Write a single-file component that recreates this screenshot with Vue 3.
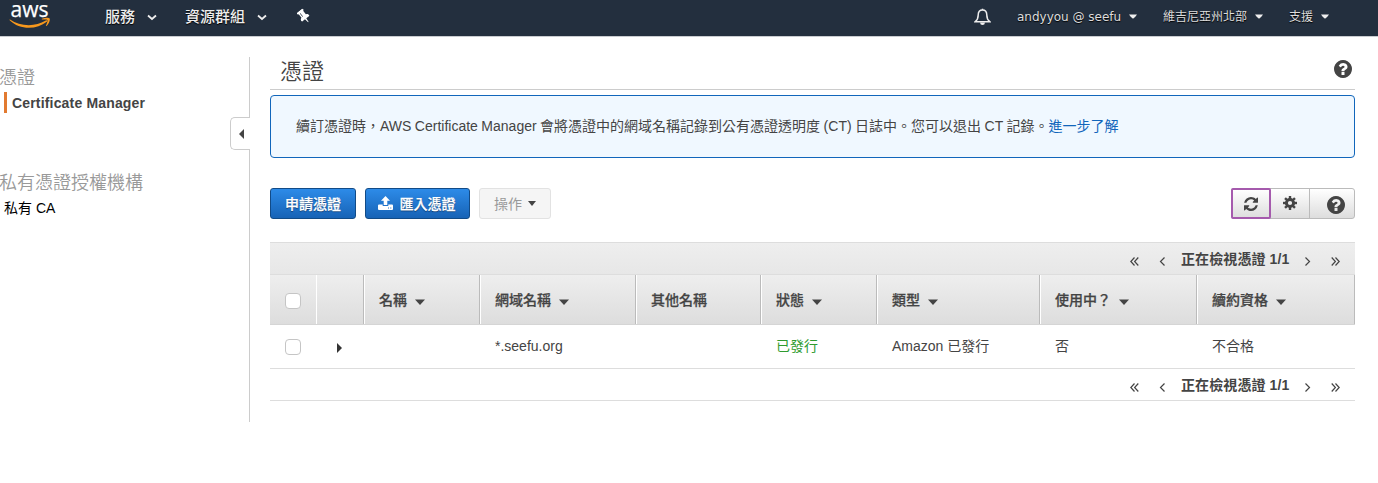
<script setup>
const columns = [
  { label: '', kind: 'check' },
  { label: '', kind: 'blank' },
  { label: '名稱', sort: true, value: '' },
  { label: '網域名稱', sort: true, value: '*.seefu.org' },
  { label: '其他名稱', sort: false, value: '' },
  { label: '狀態', sort: true, value: '已發行', tone: 'ok' },
  { label: '類型', sort: true, value: 'Amazon 已發行' },
  { label: '使用中？', sort: true, value: '否' },
  { label: '續約資格', sort: true, value: '不合格' },
]
const cells = columns.slice(2)
const pagers = ['top', 'bottom']
const helpPath = 'M896 1376v-192q0-14-9-23t-23-9h-192q-14 0-23 9t-9 23v192q0 14 9 23t23 9h192q14 0 23-9t9-23zM1152 704q0-88-55.500-163t-138.500-116-170-41q-243 0-371 213-15 24 8 42l132 100q7 6 19 6 16 0 25-12 53-68 86-92 34-24 86-24 48 0 85.500 26t37.500 59q0 38-20 61t-68 45q-63 28-115.500 86.500t-52.500 125.500v36q0 14 9 23t23 9h192q14 0 23-9t9-23q0-19 21.500-49.500t54.500-49.500q32-18 49-28.500t46-35 44.500-48 28-60.500 12.500-81zM1536 896q0 209-103 385.500t-279.500 279.500-385.500 103-385.500-103-279.500-279.500-103-385.500 103-385.500 279.500-279.500 385.500-103 385.500 103 279.500 279.500 103 385.500z'
const refreshPath = 'M1511 1056q0 5-1 7-64 268-268 434.500t-478 166.500q-146 0-282.500-55t-243.500-157l-129 129q-19 19-45 19t-45-19-19-45v-448q0-26 19-45t45-19h448q26 0 45 19t19 45-19 45l-137 137q71 66 161 102t187 36q134 0 250-65t186-179q11-17 53-117 8-23 30-23h192q13 0 22.500 9.500t9.500 22.500zM1536 256v448q0 26-19 45t-45 19h-448q-26 0-45-19t-19-45 19-45l138-138q-148-137-349-137-134 0-250 65t-186 179q-11 17-53 117-8 23-30 23h-199q-13 0-22.500-9.500t-9.500-22.500v-7q65-268 270-434.500t480-166.500q146 0 284 55.500t245 156.500l130-129q19-19 45-19t45 19 19 45z'
const pinPath = 'M480 864v-448q0-14-9-23t-23-9-23 9-9 23v448q0 14 9 23t23 9 23-9 9-23zM1152 1216q0 26-19 45t-45 19h-429l-51 483q-2 12-10.500 20.500t-20.500 8.500h-1q-27 0-32-27l-76-485h-404q-26 0-45-19t-19-45q0-123 78.500-221.500t177.500-98.500v-512q-52 0-90-38t-38-90 38-90 90-38h640q52 0 90 38t38 90-38 90-90 38v512q99 0 177.500 98.500t78.500 221.500z'
const teeth = [0, 45, 90, 135, 180, 225, 270, 315]
</script>

<template>
  <div class="page">
    <nav class="nav">
      <svg class="logo" viewBox="0 0 42 28">
        <text x="1.500" y="14" textLength="38" lengthAdjust="spacingAndGlyphs">aws</text>
        <path class="smile" d="M1 16.500C11 23.300 25.500 24.300 36.800 17.500C38 17 38.600 18 37.800 18.700C27.500 27 10.500 27 .7 17.200C.3 16.700.5 16.300 1 16.500Z" />
        <path class="smile" d="M33 15.800C36 14.300 40 14.500 40.700 15.500C41.400 17 39.700 21.300 37.500 23C37 23.300 36.700 23 37 22.500C37.800 20.500 39 17.800 38.300 17C37.500 16.200 35 16.500 33.300 16.600C32.700 16.600 32.600 16.100 33 15.800Z" />
      </svg>
      <div class="nav-main">
        <a class="item services">服務<svg class="chev" viewBox="0 0 10 7"><path d="M1 1.500L5 5L9 1.500" /></svg></a>
        <a class="item groups">資源群組<svg class="chev" viewBox="0 0 10 7"><path d="M1 1.500L5 5L9 1.500" /></svg></a>
        <svg class="pin" viewBox="0 128 1152 1664"><path :d="pinPath" /></svg>
      </div>
      <div class="nav-side">
        <svg class="bell" viewBox="0 0 17 18"><path d="M8.500 2C5.500 2 4.200 4.300 4.200 7C4.200 10.500 3 12.300 1.300 13.700H15.700C14 12.300 12.800 10.500 12.800 7C12.800 4.300 11.500 2 8.500 2Z" /><path d="M8.500.7V2" /><path class="solid" d="M6 14.500H11Q10.700 17 8.500 17Q6.300 17 6 14.500Z" /></svg>
        <a class="item user">andyyou @ seefu<svg class="caret" viewBox="0 0 8 5"><path d="M0 .5H8Q6.500 3 4 4.700Q1.500 3 0 .5Z" /></svg></a>
        <a class="item region">維吉尼亞州北部<svg class="caret" viewBox="0 0 8 5"><path d="M0 .5H8Q6.500 3 4 4.700Q1.500 3 0 .5Z" /></svg></a>
        <a class="item support">支援<svg class="caret" viewBox="0 0 8 5"><path d="M0 .5H8Q6.500 3 4 4.700Q1.500 3 0 .5Z" /></svg></a>
      </div>
    </nav>

    <div class="body">
      <aside class="side">
        <h2>憑證</h2>
        <a class="current">Certificate Manager</a>
        <h2 class="second">私有憑證授權機構</h2>
        <a class="link">私有 CA</a>
        <button class="collapse"><svg viewBox="0 0 5 10"><path d="M5 0V10L0 5Z" /></svg></button>
      </aside>

      <main class="main">
        <header class="title">
          <h1>憑證</h1>
          <svg class="help" viewBox="0 128 1536 1536"><path :d="helpPath" /></svg>
        </header>
        <p class="notice"><span>續訂憑證時，AWS Certificate Manager 會將憑證中的網域名稱記錄到公有憑證透明度 (CT) 日誌中。您可以退出 CT 記錄。<a>進一步了解</a></span></p>

        <div class="toolbar">
          <button class="btn primary request">申請憑證</button>
          <button class="btn primary import">
            <svg viewBox="0 0 15 14"><path d="M7.500 0L12 4.700H9.300V9H5.700V4.700H3Z" /><path fill-rule="evenodd" d="M1 8.500H4.700V10H10.300V8.500H14Q15 8.500 15 9.500V13Q15 14 14 14H1Q0 14 0 13V9.500Q0 8.500 1 8.500ZM10 11.500V12.500H11V11.500ZM12.300 11.500V12.500H13.300V11.500Z" /></svg>匯入憑證
          </button>
          <button class="btn disabled">操作<svg viewBox="0 0 8 5"><path d="M0 0H8L4 5Z" /></svg></button>
          <div class="tools">
            <button class="tool refresh"><svg viewBox="0 128 1536 1536"><path :d="refreshPath" /></svg></button>
            <button class="tool gear">
              <svg viewBox="0 0 14 14"><circle cx="7" cy="7" r="3.600" /><rect v-for="t in teeth" :key="t" x="5.800" y="0" width="2.400" height="3.500" :transform="`rotate(${t} 7 7)`" /></svg>
            </button>
            <button class="tool about"><svg class="help" viewBox="0 128 1536 1536"><path :d="helpPath" /></svg></button>
          </div>
        </div>

        <section class="table">
          <template v-for="p in pagers" :key="p">
            <div class="pager" :class="p">
              <svg viewBox="0 0 9 9"><path d="M4.500.5L.8 4.500L4.500 8.500M8.300.5L4.600 4.500L8.300 8.500" /></svg>
              <svg class="one" viewBox="0 0 9 9"><path d="M6.500.5L2.500 4.500L6.500 8.500" /></svg>
              <b>正在檢視憑證 1/1</b>
              <svg class="one" viewBox="0 0 9 9"><path d="M2.500.5L6.500 4.500L2.500 8.500" /></svg>
              <svg viewBox="0 0 9 9"><path d="M.7.5L4.400 4.500L.7 8.500M4.500.5L8.200 4.500L4.500 8.500" /></svg>
            </div>
            <template v-if="p === 'top'">
              <div class="row head">
                <div v-for="(c, i) in columns" :key="i" class="cell" :class="c.kind">
                  <i v-if="c.kind === 'check'" class="box"></i>
                  <template v-else>{{ c.label }}<svg v-if="c.sort" viewBox="0 0 10 6"><path d="M0 .5H10L5 6Z" /></svg></template>
                </div>
              </div>
              <div class="row data">
                <div class="cell check"><i class="box"></i></div>
                <div class="cell expand"><svg viewBox="0 0 5 10"><path d="M0 0V10L5 5Z" /></svg></div>
                <div v-for="(c, i) in cells" :key="i" class="cell" :class="c.tone">{{ c.value }}</div>
              </div>
            </template>
          </template>
        </section>
      </main>
    </div>
  </div>
</template>

<style>
body { margin: 0; background: #fff; }
</style>

<style scoped>
* { box-sizing: border-box; }
.page { width: 1378px; height: 483px; overflow: hidden; font: 14px/20px "Liberation Sans", "Noto Sans CJK TC", sans-serif; color: #444; }
svg { display: block; flex: none; }
button { font: inherit; padding: 0; margin: 0; }
h1, h2, p { margin: 0; font-weight: 350; }

.nav { display: flex; justify-content: space-between; height: 37px; background: #232f3e; border-bottom: 1px solid #c9ccd0; color: #eee; }
.logo { width: 42px; height: 28px; margin: 3px 0 0 9px; overflow: visible; }
.logo text { font: 500 22px "Open Sans", sans-serif; fill: #fff; stroke: #fff; stroke-width: .25px; }
.smile { fill: #f7981d; }
.nav-main { display: flex; flex: 1; margin-left: 54px; height: 33px; align-items: center; }
.nav-side { display: flex; height: 33px; align-items: center; }
.item { display: flex; align-items: center; white-space: nowrap; text-shadow: 0 1px 1px #000; }
.nav-main .item { font-size: 15px; font-weight: 500; margin-right: 28px; }
.chev { width: 10px; height: 7px; margin-left: 12px; fill: none; stroke: #eee; stroke-width: 1.800; margin-top: 1px; }
.pin { width: 10px; height: 15px; fill: #fff; margin-left: 4px; margin-top: -1px; transform: rotate(-38deg); }
.nav-side .item { font-size: 12px; color: #ddd; }
.nav-side .user { width: 120px; margin-left: 26px; margin-right: 26px; font-family: "DejaVu Sans", sans-serif; justify-content: space-between; }
.region { width: 100px; margin-right: 26px; justify-content: space-between; }
.support { width: 40px; margin-right: 49px; justify-content: space-between; }
.caret { width: 8px; height: 5px; fill: #eee; }
.bell { width: 17px; height: 18px; fill: none; stroke: #eee; stroke-width: 1.500; }
.bell .solid { fill: #eee; stroke: none; }

.body { display: flex; padding-top: 20px; }
.side { position: relative; width: 250px; height: 365px; border-right: 1px solid #ccc; padding-top: 9px; }
.side h2 { font-size: 18px; line-height: 24px; color: #999; margin-left: -1px; }
.current { display: block; margin: 2px 0 0 4px; height: 21px; line-height: 23px; border-left: 3px solid #e27a30; padding-left: 5px; font-weight: 700; letter-spacing: .17px; }
.side .second { margin-top: 58px; }
.link { display: block; margin: 3px 0 0 4px; color: #000; line-height: 20px; }
.collapse { position: absolute; left: 230px; top: 60px; width: 20px; height: 33px; border: 1px solid #ccc; border-right: 0; border-radius: 5px 0 0 5px; background: #fff; }
.collapse svg { width: 5px; height: 10px; margin-left: 8px; fill: #444; }

.main { width: 1085px; margin-left: 20px; }
.title { display: flex; justify-content: space-between; align-items: center; height: 33px; border-bottom: 1px solid #ccc; padding: 0 3px 7px 10px; }
.title h1 { font-size: 22px; line-height: 26px; padding-top: 5px; }
.title .help { margin-top: -1px; }
.help { width: 18px; height: 18px; fill: #444; }
.notice { display: flex; align-items: center; height: 63px; margin-top: 5px; padding: 0 25px 2px; border: 1px solid #1166bb; border-radius: 4px; background: #f0f8ff; white-space: nowrap; word-spacing: -.4px; font-weight: 400; }
.notice a { color: #1166bb; }

.toolbar { display: flex; height: 31px; margin-top: 30px; }
.btn { display: flex; align-items: center; justify-content: center; height: 31px; margin-right: 9px; border-radius: 3px; }
.primary { color: #fff; font-weight: 500; -webkit-text-stroke: .25px #fff; border: 1px solid #124b87; background: linear-gradient(#2d8be8, #1763b6); text-shadow: 0 1px 1px #0a3567; }
.request { width: 86px; }
.import { width: 105px; padding-right: 2px; }
.import svg { width: 15px; height: 14px; margin: -2px 7px 0 0; fill: #fff; }
.disabled { width: 72px; border: 1px solid #e2e2e2; background: #f5f5f5; color: #999; }
.disabled svg { width: 8px; height: 5px; margin-left: 6px; fill: #444; }
.tools { display: flex; margin-left: auto; width: 124px; height: 31px; border: 1px solid #bbb; border-radius: 3px; background: linear-gradient(#fff, #ddd); }
.tool { display: flex; align-items: center; justify-content: center; border: 0; background: none; }
.refresh { width: 40px; height: 31px; margin: -1px 0 0 -1px; border: 2px solid #a55aad; border-radius: 2px; }
.refresh svg { width: 14px; height: 14px; fill: #444; }
.gear { width: 39px; padding-bottom: 1px; border-right: 1px solid #bbb; }
.gear svg { width: 14px; height: 14px; fill: #444; }
.gear circle { fill: none; stroke: #444; stroke-width: 3; }
.about { flex: 1; padding: 3px 0 0 7px; }

.table { margin-top: 23px; }
.pager { display: flex; align-items: center; justify-content: flex-end; height: 32px; border-bottom: 1px solid #ddd; padding-right: 15px; }
.pager.top { height: 33px; border-top: 1px solid #ddd; background: linear-gradient(#eee, #e7e7e7); }
.pager svg { width: 9px; height: 9px; margin-top: 6px; fill: none; stroke: #444; stroke-width: 1.200; }
.pager .one { margin: 6px 14px 0 19px; }
.pager b + .one { margin: 6px 19px 0 14px; }
.pager b { width: 108px; white-space: nowrap; letter-spacing: .1px; }
.row { display: grid; grid-template-columns: 46px 48px 116px 156px 125px 116px 163px 157px 158px; }
.head { height: 50px; border-bottom: 1px solid #d5d5d5; background: linear-gradient(#eee, #ddd); font-weight: 500; -webkit-text-stroke: .25px #444; }
.cell { display: flex; align-items: center; padding-left: 15px; white-space: nowrap; }
.head .cell { border-right: 1px solid #bbb; border-left: 1px solid #fff; padding-left: 14px; }
.head .check { border-right: 0; border-left: 0; padding-left: 15px; }
.head svg { width: 10px; height: 6px; margin: 4px 0 0 8px; fill: #444; }
.box { width: 16px; height: 16px; margin-top: 2px; border: 1px solid #c5c5c5; border-radius: 4px; background: #fff; }
.data { height: 44px; border-bottom: 1px solid #ddd; }
.data .cell { padding-bottom: 1px; }
.data .expand { padding-left: 21px; }
.expand svg { width: 5px; height: 10px; margin-top: 3px; fill: #333; }
.ok { color: #2f9b2f; }
</style>
